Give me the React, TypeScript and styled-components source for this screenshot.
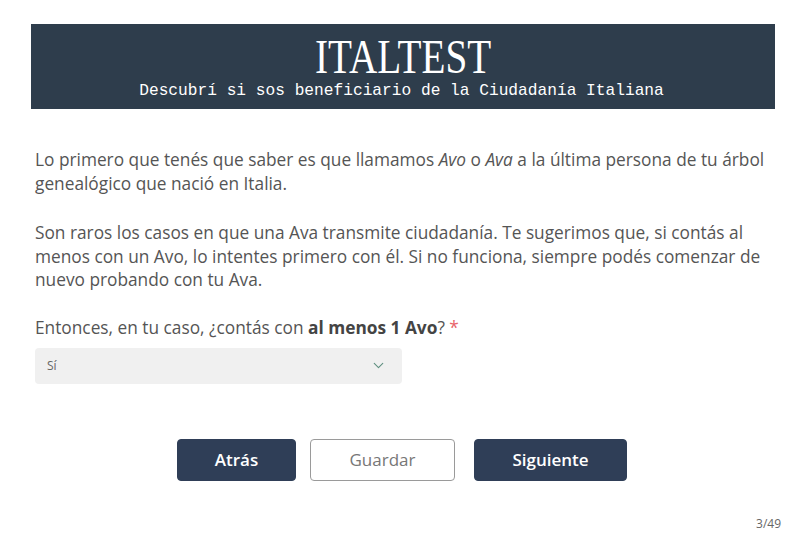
import React from 'react';
import styled, { createGlobalStyle } from 'styled-components';

const GlobalStyle = createGlobalStyle`
  body {
    margin: 0;
    background: #ffffff;
    font-family: 'Open Sans', 'Liberation Sans', sans-serif;
  }
`;

function App() {
  return (
    <Page>
      <GlobalStyle />
      <Header>
        <Title>ITALTEST</Title>
        <Subtitle>Descubrí si sos beneficiario de la Ciudadanía Italiana</Subtitle>
      </Header>
      <Content>
        <Paragraph>
          Lo primero que tenés que saber es que llamamos <em>Avo</em> o <em>Ava</em> a la última persona de tu
          árbol genealógico que nació en Italia.
        </Paragraph>
        <Paragraph>
          Son raros los casos en que una Ava transmite ciudadanía. Te sugerimos que, si contás al menos con un
          Avo, lo intentes primero con él. Si no funciona, siempre podés comenzar de nuevo probando con tu Ava.
        </Paragraph>
        <Question>
          Entonces, en tu caso, ¿contás con <strong>al menos 1 Avo</strong>? <Required>*</Required>
        </Question>
        <Select>
          <span>Sí</span>
          <svg width="17" height="17" viewBox="0 0 24 24" fill="none" stroke="#5f8f80" strokeWidth="1.6" strokeLinecap="round" strokeLinejoin="round">
            <polyline points="6 9 12 15 18 9" />
          </svg>
        </Select>
        <Actions>
          <Button $primary $width={119}>Atrás</Button>
          <Button $width={145}>Guardar</Button>
          <Button $primary $width={153} $spaced>Siguiente</Button>
        </Actions>
        <Counter>3/49</Counter>
      </Content>
    </Page>
  );
}

export default App;

const Page = styled.div`
  padding: 24px 25px 0 31px;
`;

const Header = styled.div`
  height: 85px;
  background: #2e3d4c;
  display: flex;
  flex-direction: column;
  align-items: center;
  padding-top: 8px;
  box-sizing: border-box;
  color: #ffffff;
`;

const Title = styled.div`
  font-family: 'Liberation Serif', 'Times New Roman', serif;
  font-size: 49px;
  line-height: 50px;
  transform: scaleX(0.8);
`;

const Subtitle = styled.div`
  font-family: 'Liberation Mono', 'Courier New', monospace;
  font-size: 16.2px;
  line-height: 18px;
  margin-left: -3px;
`;

const Content = styled.div`
  padding: 39px 0 0 4px;
  color: #555555;
`;

const Paragraph = styled.p`
  margin: 0 0 26px;
  font-size: 17.3px;
  line-height: 23.5px;

  em {
    font-style: italic;
  }
`;

const Question = styled.p`
  margin: -2px 0 8px;
  font-size: 17.3px;
  line-height: 24px;

  strong {
    font-weight: 700;
    color: #444444;
  }
`;

const Required = styled.span`
  color: #e8646a;
`;

const Select = styled.div`
  width: 367px;
  height: 36px;
  background: #f0f0f0;
  border-radius: 4px;
  display: flex;
  align-items: center;
  justify-content: space-between;
  padding: 0 15px 0 12px;
  box-sizing: border-box;
  font-size: 12px;
  color: #666666;
`;

const Actions = styled.div`
  display: flex;
  justify-content: center;
  gap: 14px;
  margin-top: 55px;
  padding-right: 6px;
`;

const Button = styled.button<{ $primary?: boolean; $width: number; $spaced?: boolean }>`
  width: ${(p) => p.$width}px;
  height: 42px;
  margin-left: ${(p) => (p.$spaced ? 5 : 0)}px;
  border-radius: 4px;
  font-family: 'Open Sans', 'Liberation Sans', sans-serif;
  font-size: 17px;
  font-weight: ${(p) => (p.$primary ? 600 : 400)};
  background: ${(p) => (p.$primary ? '#2f3e57' : '#ffffff')};
  color: ${(p) => (p.$primary ? '#ffffff' : '#777777')};
  border: 1px solid ${(p) => (p.$primary ? '#2f3e57' : '#9a9a9a')};
  cursor: pointer;
`;

const Counter = styled.div`
  text-align: right;
  font-size: 12px;
  color: #666666;
  margin-top: 34px;
  margin-right: -6px;
`;
